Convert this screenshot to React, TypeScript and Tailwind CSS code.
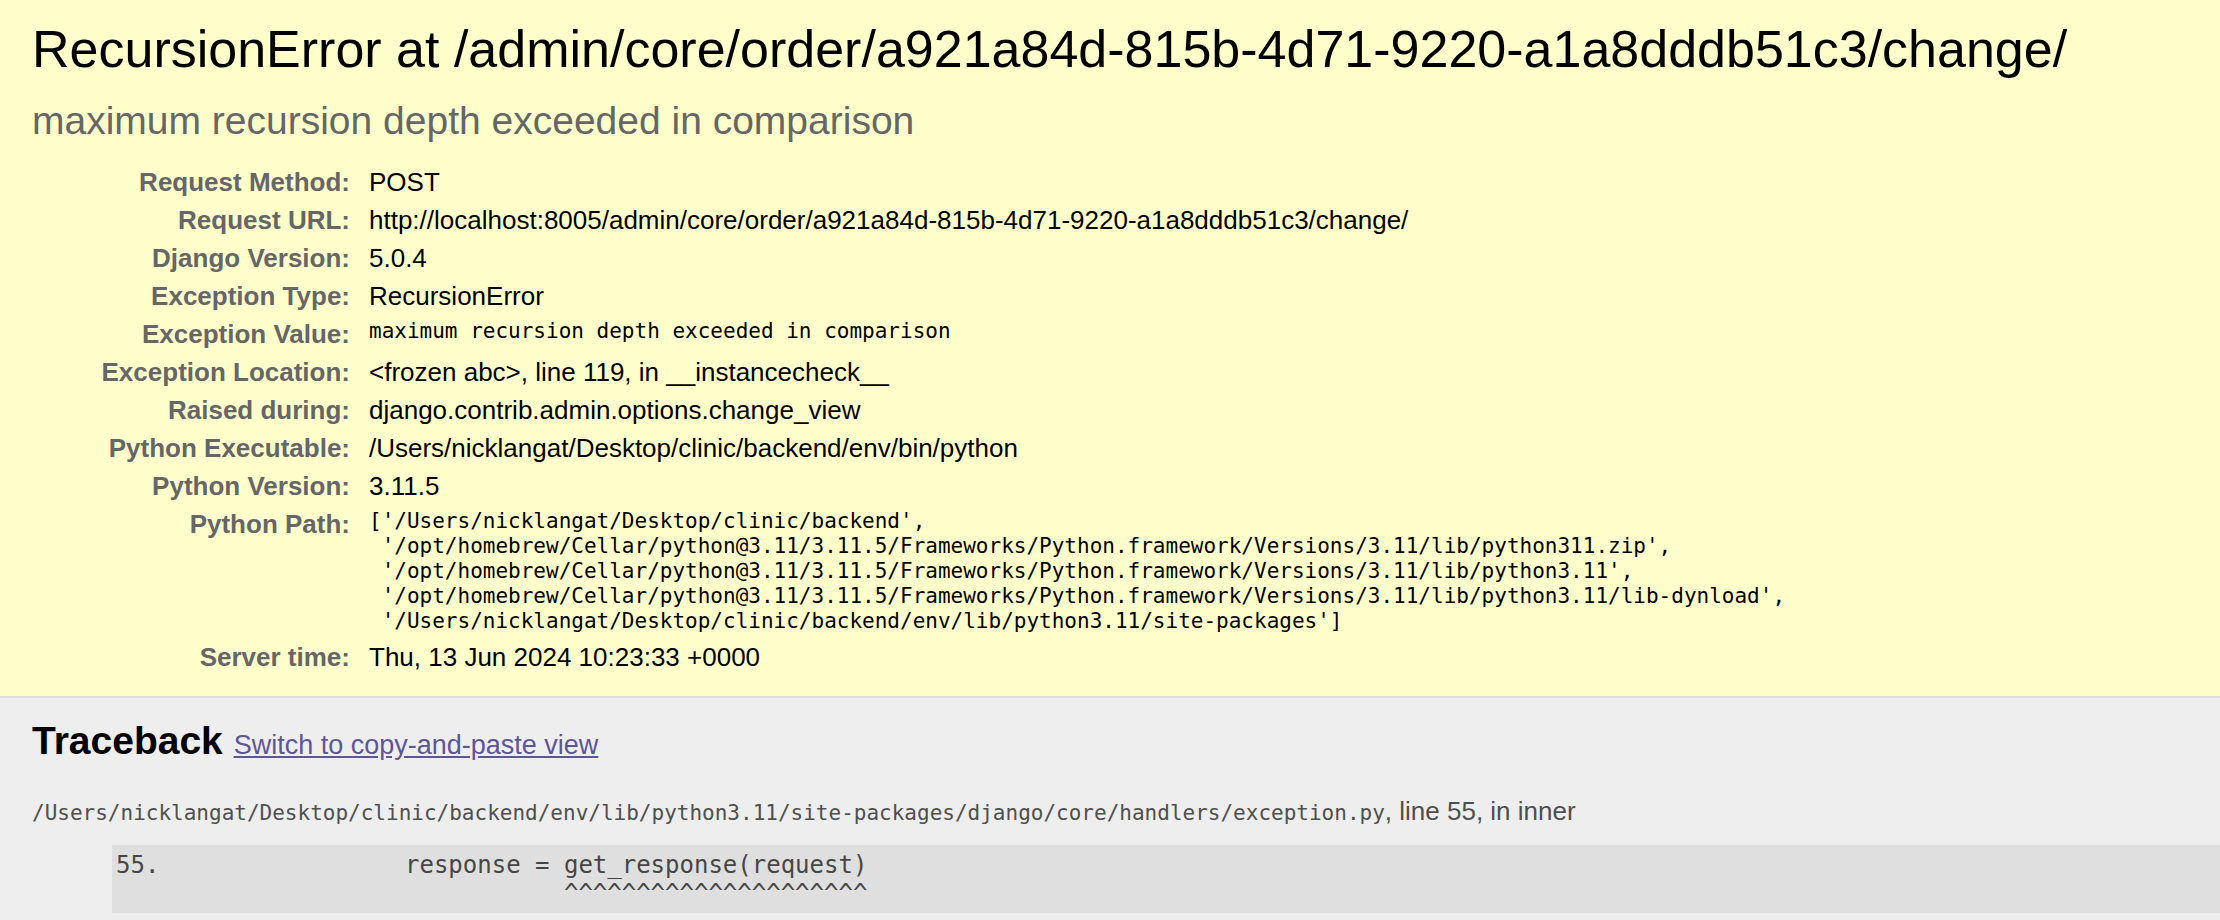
const sans = "font-['Liberation_Sans','Helvetica',Arial,sans-serif]";
const mono = "font-['DejaVu_Sans_Mono','Liberation_Mono',monospace]";

type Row = { label: string; value: string; code?: boolean };

const pythonPath = `['/Users/nicklangat/Desktop/clinic/backend',
 '/opt/homebrew/Cellar/python@3.11/3.11.5/Frameworks/Python.framework/Versions/3.11/lib/python311.zip',
 '/opt/homebrew/Cellar/python@3.11/3.11.5/Frameworks/Python.framework/Versions/3.11/lib/python3.11',
 '/opt/homebrew/Cellar/python@3.11/3.11.5/Frameworks/Python.framework/Versions/3.11/lib/python3.11/lib-dynload',
 '/Users/nicklangat/Desktop/clinic/backend/env/lib/python3.11/site-packages']`;

const rows: Row[] = [
  { label: "Request Method:", value: "POST" },
  {
    label: "Request URL:",
    value:
      "http://localhost:8005/admin/core/order/a921a84d-815b-4d71-9220-a1a8dddb51c3/change/",
  },
  { label: "Django Version:", value: "5.0.4" },
  { label: "Exception Type:", value: "RecursionError" },
  {
    label: "Exception Value:",
    value: "maximum recursion depth exceeded in comparison",
    code: true,
  },
  {
    label: "Exception Location:",
    value: "<frozen abc>, line 119, in __instancecheck__",
  },
  { label: "Raised during:", value: "django.contrib.admin.options.change_view" },
  {
    label: "Python Executable:",
    value: "/Users/nicklangat/Desktop/clinic/backend/env/bin/python",
  },
  { label: "Python Version:", value: "3.11.5" },
  { label: "Python Path:", value: pythonPath, code: true },
  { label: "Server time:", value: "Thu, 13 Jun 2024 10:23:33 +0000" },
];

const contextLine =
  "55." +
  " ".repeat(17) +
  "response = get_response(request)\n" +
  " ".repeat(31) +
  "^".repeat(21);

function Summary() {
  return (
    <div className="bg-[#ffc] px-[32px] pt-[20px] pb-[20px] border-b-2 border-[#ddd]">
      <h1 className="text-[52px] leading-[58px] font-normal text-black whitespace-nowrap">
        RecursionError at /admin/core/order/a921a84d-815b-4d71-9220-a1a8dddb51c3/change/
      </h1>
      <h2 className="mt-[21px] text-[39px] leading-[44px] font-normal text-[#666]">
        maximum recursion depth exceeded in comparison
      </h2>
      <div className="mt-[20px] grid grid-cols-[331px_1fr] items-start">
        {rows.map((row) => (
          <div key={row.label} className="contents">
            <div className="pl-[6px] pr-[13px] py-[4px] text-right font-bold text-[#666] text-[26px] leading-[30px]">
              {row.label}
            </div>
            {row.code ? (
              <pre
                className={`${mono} px-[6px] py-[4px] text-[21px] leading-[25px] text-black whitespace-pre`}
              >
                {row.value}
              </pre>
            ) : (
              <div className="px-[6px] py-[4px] text-[26px] leading-[30px] text-black whitespace-nowrap">
                {row.value}
              </div>
            )}
          </div>
        ))}
      </div>
    </div>
  );
}

function Traceback() {
  return (
    <div className="bg-[#eee] pl-[32px] pt-[21px] pb-[40px]">
      <h2 className="text-[39px] leading-[44px] font-bold text-black mb-[29px]">
        Traceback{" "}
        <span className="text-[27px] font-normal">
          <a href="#" className="text-[#5E5694] underline">
            Switch to copy-and-paste view
          </a>
        </span>
      </h2>
      <ul className="text-[#4f4f4f]">
        <li className="pb-[26px]">
          <div className="text-[26px] leading-[30px] whitespace-nowrap">
            <code className={`${mono} text-[21px]`}>
              /Users/nicklangat/Desktop/clinic/backend/env/lib/python3.11/site-packages/django/core/handlers/exception.py
            </code>
            , line 55, in inner
          </div>
          <div className="pt-[17px] pb-[20px] overflow-hidden">
            <ol className="ml-[80px]">
              <li className="bg-[#dfdfdf] px-[4px] py-[6px] text-[#464646]">
                <pre className={`${mono} text-[24px] leading-[28px] whitespace-pre`}>
                  {contextLine}
                </pre>
              </li>
            </ol>
          </div>
        </li>
      </ul>
    </div>
  );
}

export default function App() {
  return (
    <div className={`${sans} min-h-screen bg-[#eee] text-black`}>
      <Summary />
      <Traceback />
    </div>
  );
}
